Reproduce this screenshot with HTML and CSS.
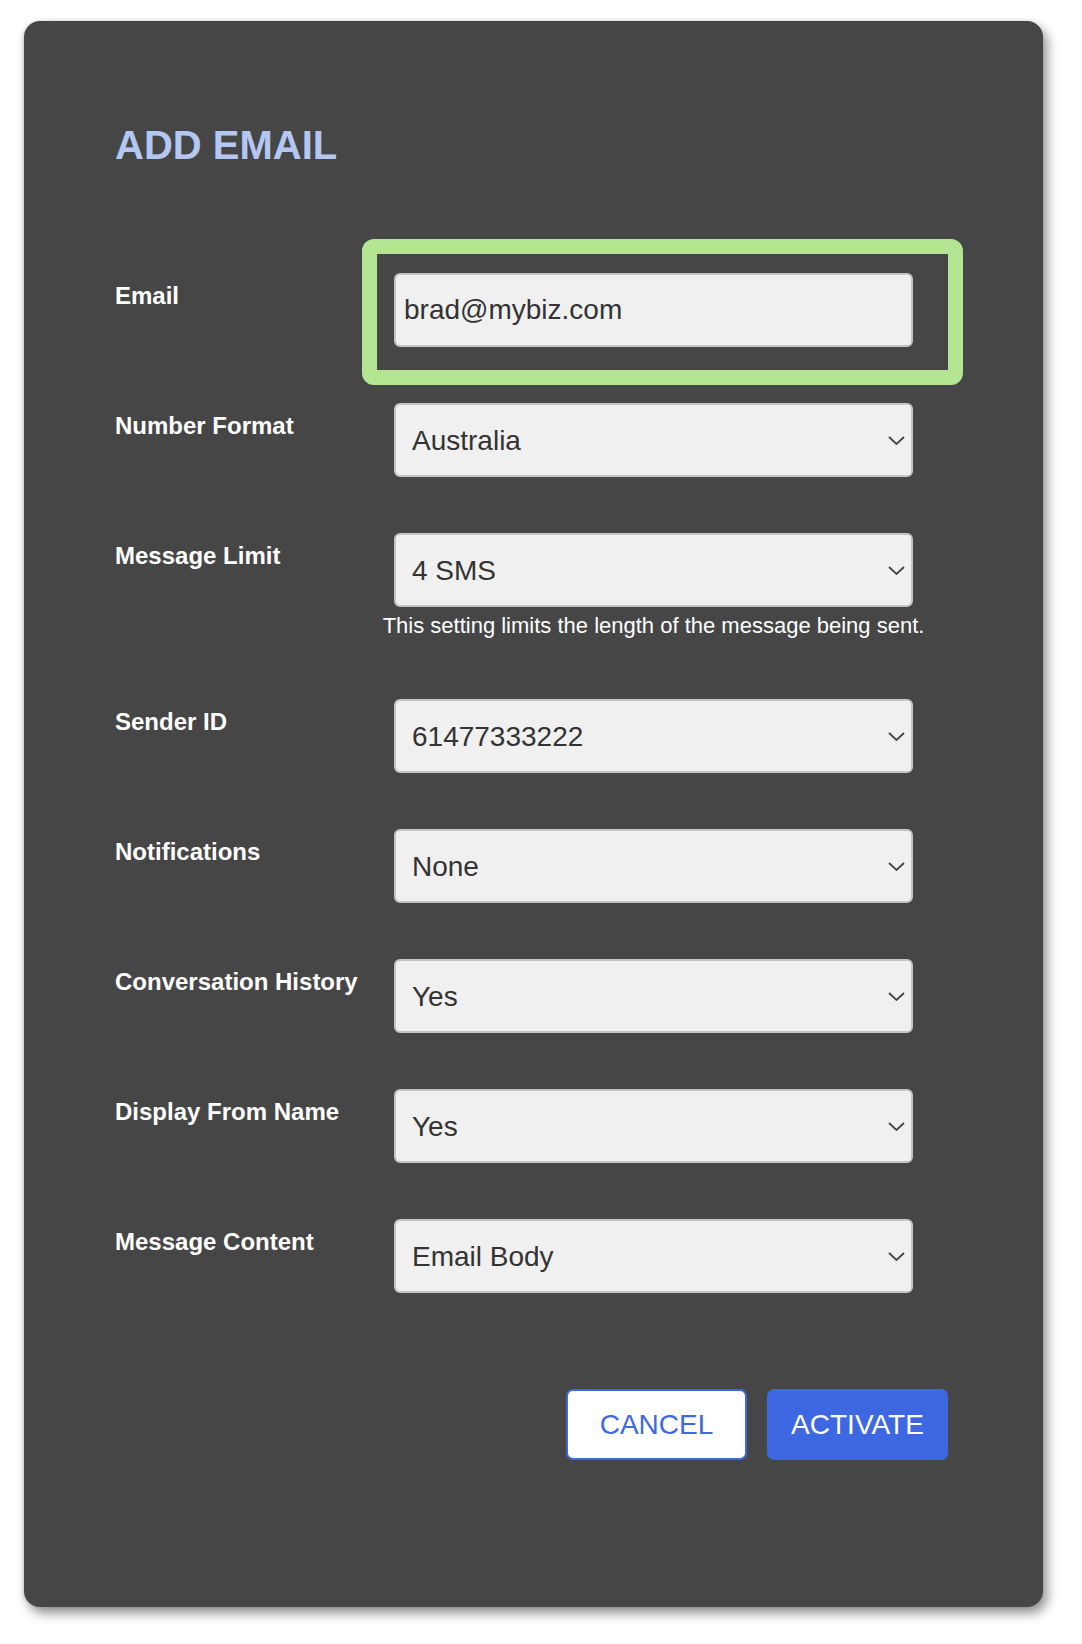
FILE: index.html
```html
<!DOCTYPE html>
<html lang="en">
<head>
<meta charset="utf-8">
<title>Add Email</title>
<link rel="stylesheet" href="styles.css">
</head>
<body>
<div class="card">
  <h1 class="title">ADD EMAIL</h1>
  <form class="form">
    <div class="row">
      <label class="label" for="email">Email</label>
      <div class="field highlight-wrap">
        <input class="input" id="email" type="text" value="brad@mybiz.com">
        <div class="highlight"></div>
      </div>
    </div>

    <div class="row">
      <label class="label" for="fmt">Number Format</label>
      <div class="field">
        <div class="select-wrap">
          <select class="select" id="fmt"><option>Australia</option></select>
          <svg class="chev" width="17" height="9" viewBox="0 0 17 9"><polyline points="1,1 8.5,8 16,1" fill="none" stroke="#444" stroke-width="1.8"/></svg>
        </div>
      </div>
    </div>

    <div class="row">
      <label class="label" for="lim">Message Limit</label>
      <div class="field">
        <div class="select-wrap">
          <select class="select" id="lim"><option>4 SMS</option></select>
          <svg class="chev" width="17" height="9" viewBox="0 0 17 9"><polyline points="1,1 8.5,8 16,1" fill="none" stroke="#444" stroke-width="1.8"/></svg>
        </div>
        <div class="help"><span>This setting limits the length of the message being sent.</span></div>
      </div>
    </div>

    <div class="row">
      <label class="label" for="sid">Sender ID</label>
      <div class="field">
        <div class="select-wrap">
          <select class="select" id="sid"><option>61477333222</option></select>
          <svg class="chev" width="17" height="9" viewBox="0 0 17 9"><polyline points="1,1 8.5,8 16,1" fill="none" stroke="#444" stroke-width="1.8"/></svg>
        </div>
      </div>
    </div>

    <div class="row">
      <label class="label" for="not">Notifications</label>
      <div class="field">
        <div class="select-wrap">
          <select class="select" id="not"><option>None</option></select>
          <svg class="chev" width="17" height="9" viewBox="0 0 17 9"><polyline points="1,1 8.5,8 16,1" fill="none" stroke="#444" stroke-width="1.8"/></svg>
        </div>
      </div>
    </div>

    <div class="row">
      <label class="label" for="hist">Conversation History</label>
      <div class="field">
        <div class="select-wrap">
          <select class="select" id="hist"><option>Yes</option></select>
          <svg class="chev" width="17" height="9" viewBox="0 0 17 9"><polyline points="1,1 8.5,8 16,1" fill="none" stroke="#444" stroke-width="1.8"/></svg>
        </div>
      </div>
    </div>

    <div class="row">
      <label class="label" for="dfn">Display From Name</label>
      <div class="field">
        <div class="select-wrap">
          <select class="select" id="dfn"><option>Yes</option></select>
          <svg class="chev" width="17" height="9" viewBox="0 0 17 9"><polyline points="1,1 8.5,8 16,1" fill="none" stroke="#444" stroke-width="1.8"/></svg>
        </div>
      </div>
    </div>

    <div class="row">
      <label class="label" for="mc">Message Content</label>
      <div class="field">
        <div class="select-wrap">
          <select class="select" id="mc"><option>Email Body</option></select>
          <svg class="chev" width="17" height="9" viewBox="0 0 17 9"><polyline points="1,1 8.5,8 16,1" fill="none" stroke="#444" stroke-width="1.8"/></svg>
        </div>
      </div>
    </div>
  </form>

  <div class="actions">
    <button class="btn btn-cancel" type="button">CANCEL</button>
    <button class="btn btn-activate" type="button">ACTIVATE</button>
  </div>
</div>
</body>
</html>
```

FILE: styles.css
```css
* { box-sizing: border-box; }

html, body {
  margin: 0;
  padding: 0;
  background: #ffffff;
}

body {
  font-family: "Liberation Sans", Arial, sans-serif;
  padding: 21px 0 0 24px;
  height: 1644px;
}

.card {
  width: 1019px;
  height: 1586px;
  background: #464646;
  border-radius: 16px;
  box-shadow: 4px 6px 12px rgba(0, 0, 0, 0.45), -1px 0 3px rgba(0, 0, 0, 0.12);
  padding: 100px 95px 0 91px;
}

.title {
  margin: 0;
  font-size: 40px;
  line-height: 48px;
  font-weight: 700;
  color: #b4c6f2;
}

.form {
  margin-top: 104px;
  display: flex;
  flex-direction: column;
  gap: 56px;
}

.row {
  display: grid;
  grid-template-columns: 279px 519px;
  align-items: start;
}

.label {
  padding-top: 9px;
  font-size: 24px;
  line-height: 28px;
  font-weight: 700;
  color: #ffffff;
}

.field {
  display: flex;
  flex-direction: column;
}

.highlight-wrap {
  position: relative;
}

.highlight {
  position: absolute;
  left: -32px;
  top: -34px;
  right: -50px;
  bottom: -38px;
  border: 15px solid #b4e593;
  border-radius: 12px;
  pointer-events: none;
}

.input,
.select {
  display: block;
  width: 519px;
  height: 74px;
  margin: 0;
  background: #f0f0f0;
  border: 2px solid #c4c4c4;
  border-radius: 6px;
  font-family: "Liberation Sans", Arial, sans-serif;
  font-size: 28px;
  color: #333333;
  outline: none;
}

.input {
  padding: 0 8px;
}

.select-wrap {
  position: relative;
}

.select {
  -webkit-appearance: none;
  appearance: none;
  padding: 0 40px 0 16px;
}

.chev {
  position: absolute;
  right: 8px;
  top: 33px;
  pointer-events: none;
}

.help {
  display: flex;
  justify-content: center;
  margin: 6px 0 4px;
  font-size: 22px;
  line-height: 26px;
  color: #ffffff;
  white-space: nowrap;
}

.actions {
  margin-top: 96px;
  display: flex;
  justify-content: flex-end;
  gap: 20px;
}

.btn {
  min-width: 181px;
  height: 71px;
  padding: 0 22px;
  border-radius: 7px;
  font-family: "Liberation Sans", Arial, sans-serif;
  font-size: 28px;
  line-height: 1;
  cursor: pointer;
}

.btn-cancel {
  background: #ffffff;
  border: 2px solid #3e69e1;
  color: #3e69e1;
}

.btn-activate {
  background: #3d68e2;
  border: 2px solid #3d68e2;
  color: #ffffff;
}
```
